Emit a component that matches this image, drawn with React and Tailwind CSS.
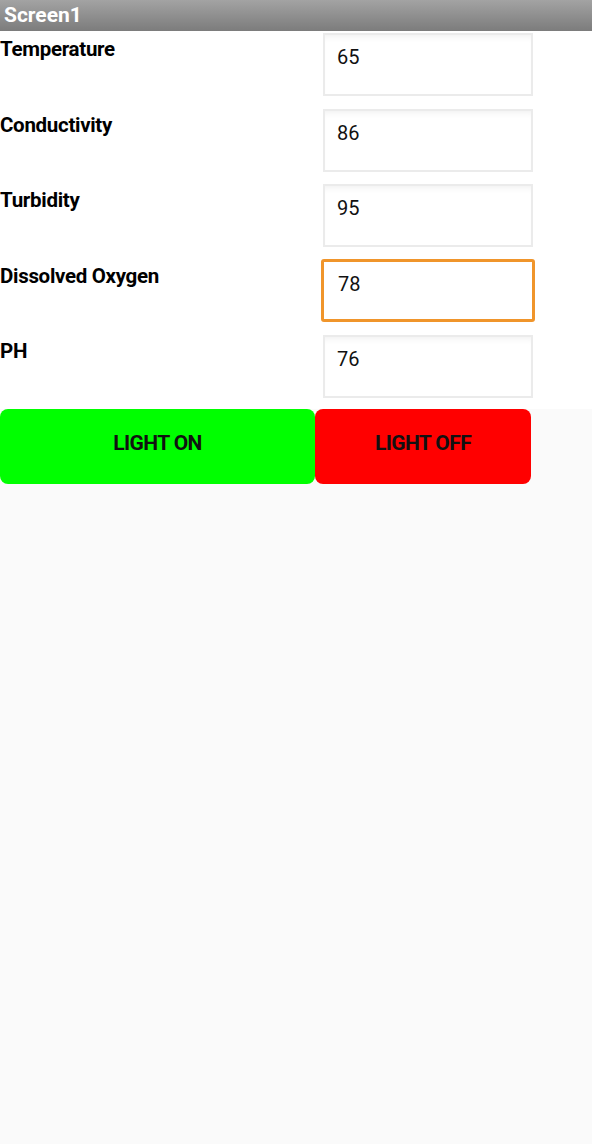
import React from "react";

const rows = [
  { label: "Temperature", value: "65" },
  { label: "Conductivity", value: "86" },
  { label: "Turbidity", value: "95" },
  { label: "Dissolved Oxygen", value: "78", focused: true },
  { label: "PH", value: "76" },
];

export default function App() {
  return (
    <div className="w-[592px] h-[1144px] bg-[#fafafa] flex flex-col" style={{ fontFamily: "Roboto, 'Liberation Sans', sans-serif" }}>
      <div className="h-[31px] bg-gradient-to-b from-[#a3a3a3] to-[#7c7c7c] flex items-center pl-[4px]">
        <span className="text-white font-bold text-[21px] leading-none">Screen1</span>
      </div>
      <div className="bg-white flex flex-col">
        {rows.map((r) => (
          <div key={r.label} className="h-[75.6px] flex">
            <div className="w-[323px] pt-[6px] text-[20.5px] font-bold text-black leading-[24px] tracking-[-0.3px]">{r.label}</div>
            {r.focused ? (
              <div className="ml-[-2px] mt-[1px] w-[214px] h-[63px] border-[3px] border-[#f0952b] rounded-[3px] bg-white pl-[14px] pt-[10px] text-[20px] leading-[24px] text-[#111]">
                {r.value}
              </div>
            ) : (
              <div className="mt-[2px] w-[210px] h-[63px] border-2 border-[#ebebeb] bg-white shadow-[inset_0_6px_6px_-4px_rgba(0,0,0,0.06)] pl-[12px] pt-[10px] text-[20px] leading-[24px] text-[#111]">
                {r.value}
              </div>
            )}
          </div>
        ))}
      </div>
      <div className="flex h-[75px]">
        <button className="w-[315px] h-[75px] bg-[#00ff00] rounded-[8px] text-[21px] font-bold text-[#111] tracking-[-0.6px] pb-[6px]">LIGHT ON</button>
        <button className="w-[216px] h-[75px] bg-[#ff0000] rounded-[8px] text-[21px] font-bold text-[#111] tracking-[-0.6px] pb-[6px]">LIGHT OFF</button>
      </div>
    </div>
  );
}
